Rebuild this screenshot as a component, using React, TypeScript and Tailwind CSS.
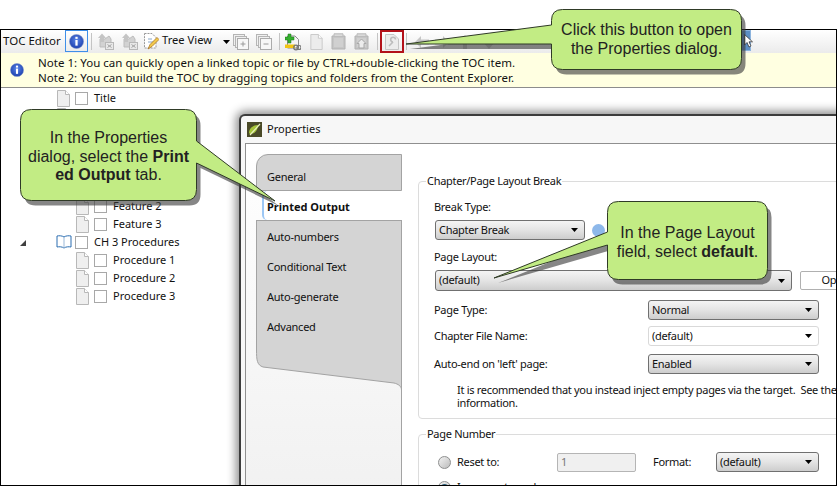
import React from "react";

const Info = ({ size = 15 }: { size?: number }) => (
  <svg width={size} height={size} viewBox="0 0 16 16" className="shrink-0">
    <defs>
      <radialGradient id="ig" cx="50%" cy="40%" r="60%">
        <stop offset="0%" stopColor="#5b86e8" />
        <stop offset="100%" stopColor="#1c3fae" />
      </radialGradient>
    </defs>
    <circle cx="8" cy="8" r="7.5" fill="url(#ig)" stroke="#7f95c9" strokeWidth="0.6" />
    <rect x="6.8" y="3" width="2.4" height="2.2" fill="#fff" />
    <rect x="6.8" y="6.4" width="2.4" height="6" fill="#fff" />
  </svg>
);

const Doc = ({ w = 13, h = 17, fill = "#efefef", stroke = "#b8b8b8" }: { w?: number; h?: number; fill?: string; stroke?: string }) => (
  <svg width={w} height={h} viewBox="0 0 13 17" className="shrink-0">
    <path d="M.5.5H8.5L12.5 4.5V16.5H.5Z" fill={fill} stroke={stroke} />
    <path d="M8.5.5V4.5H12.5" fill="#fff" stroke={stroke} />
  </svg>
);

const Check = () => <div className="w-[13px] h-[13px] shrink-0 border border-[#a8a8a8] bg-white" />;

const Sep = ({ ml }: { ml: string }) => <div className={`w-px h-[17px] bg-[#c4c4c4] shrink-0 ${ml}`} />;

const DualGray = ({ plus }: { plus: boolean }) => (
  <svg width="16" height="16" viewBox="0 0 16 16" className="shrink-0">
    <rect x="0.5" y="0.5" width="11" height="11" fill="#f0f0f0" stroke="#b5b5b5" />
    <rect x="2.5" y="2.5" width="11" height="11" fill="#f0f0f0" stroke="#b5b5b5" />
    <rect x="4.5" y="4.5" width="11" height="11" fill="#f7f7f7" stroke="#ababab" />
    <path d={plus ? "M7.500 10H12.500M10 7.500V12.500" : "M7.500 10H12.500"} stroke="#9a9a9a" />
  </svg>
);

const MoveGray = () => (
  <svg width="17" height="17" viewBox="0 0 17 17" className="shrink-0">
    <path d="M3 6H8L12 3L14 6V14H3Z" fill="#d2d2d2" stroke="#bcbcbc" />
    <path d="M5 .5L9 5H7V9H3V5H1Z" fill="#c4c4c4" />
    <rect x="8.500" y="9.500" width="8" height="7" fill="#e8e8e8" stroke="#b8b8b8" />
    <path d="M10.500 11.500L14.500 14.500M14.500 11.500L10.500 14.500" stroke="#a2a2a2" />
  </svg>
);

const BookGray = ({ arrow }: { arrow?: boolean }) => (
  <svg width="15" height="17" viewBox="0 0 15 17" className="shrink-0">
    <path d="M1 3H14V16H1Z" fill="#c6c6c6" stroke="#b2b2b2" />
    <path d="M3 3V.8H12V3" fill="#dadada" stroke="#bababa" />
    <path d="M3 5H12V14H3Z" fill="#d0d0d0" />
    {arrow && <path d="M7.500 6L12 10.500H10V15H5V10.500H3Z" fill="#ececec" stroke="#a8a8a8" />}
  </svg>
);

const Arrow = ({ flip }: { flip?: boolean }) => (
  <svg width="14" height="12" viewBox="0 0 14 12" className={`shrink-0 ${flip ? "scale-x-[-1]" : ""}`}>
    <path d="M0 6L6 0V3.500H14V8.500H6V12Z" fill="#c6c6c6" />
  </svg>
);

const Caret = () => (
  <svg width="7" height="4" viewBox="0 0 7 4" className="shrink-0">
    <path d="M0 0H7L3.500 4Z" fill="#000" />
  </svg>
);

const Toolbar = () => (
  <div className="h-[23px] flex items-center bg-linear-to-b from-white to-[#ebebeb] shrink-0 relative">
    <span className="ml-[2px] w-[62px] pb-[2px] text-[11.500px]">TOC Editor</span>
    <div className="w-[23px] h-[22px] border border-[#3f8fe8] flex items-center justify-center shrink-0 -mt-[1px]">
      <Info size={15} />
    </div>
    <Sep ml="ml-[3px]" />
    <div className="ml-[5px]"><MoveGray /></div>
    <div className="ml-[7px]"><MoveGray /></div>
    <svg width="15" height="17" viewBox="0 0 15 17" className="ml-[6px] shrink-0">
      <path d="M.5.5H8L12 4.500V15H.5Z" fill="#fff" stroke="#999" strokeDasharray="2 1" />
      <path d="M4 9H10M4 6H8" stroke="#8aa8c8" />
      <path d="M4 16L6 11.500L13 4.500L15 6.500L8 13.500Z" fill="#f2c94c" stroke="#a06a20" strokeWidth="0.7" />
    </svg>
    <span className="ml-[3px] w-[61px] pb-[2px] text-[11.200px]">Tree View</span>
    <Caret />
    <div className="ml-[3px]"><DualGray plus /></div>
    <div className="ml-[7px]"><DualGray plus={false} /></div>
    <Sep ml="ml-[7px]" />
    <svg width="16" height="18" viewBox="0 0 16 18" className="ml-[5px] shrink-0">
      <path d="M2.500 3H10L13.500 6.500V15H2.500Z" fill="#f4f4f4" stroke="#8a8a8a" />
      <path d="M0 4H3V1H6V4H9V7H6V10H3V7H0Z" fill="#35b02f" stroke="#1d7a1a" strokeWidth="0.5" />
      <rect x="0" y="11.500" width="10" height="3.500" fill="#f2c414" />
      <circle cx="11" cy="14.500" r="2.300" fill="none" stroke="#777" strokeWidth="1.200" />
      <circle cx="14" cy="14.500" r="2" fill="none" stroke="#777" strokeWidth="1.200" />
    </svg>
    <div className="ml-[9px]"><Doc w={13} h={16} fill="#ececec" stroke="#c7c7c7" /></div>
    <div className="ml-[8px]"><BookGray /></div>
    <div className="ml-[8px]"><BookGray arrow /></div>
    <Sep ml="ml-[8px]" />
    <div className="ml-[2px] w-[24px] h-[23px] border-2 border-[#b3121a] flex items-center justify-center shrink-0">
      <svg width="14" height="16" viewBox="0 0 14 16">
        <path d="M.5.5H9L13.500 5V15.500H.5Z" fill="#ececec" stroke="#c6c6c6" />
        <path d="M4 12L8 8M8 8A2.400 2.400 0 1 1 10.500 5.500" fill="none" stroke="#bdbdbd" strokeWidth="1.600" />
      </svg>
    </div>
    <Sep ml="ml-[2px]" />
    <div className="ml-[8px]"><Arrow /></div>
    <div className="ml-[6px]"><Arrow flip /></div>
    <svg width="12" height="14" viewBox="0 0 12 14" className="ml-[10px] shrink-0">
      <path d="M6 0L12 7H8V14H4V7H0Z" fill="#c6c6c6" />
    </svg>
    <svg width="12" height="14" viewBox="0 0 12 14" className="ml-[12px] shrink-0">
      <path d="M6 14L12 7H8V0H4V7H0Z" fill="#c6c6c6" />
    </svg>
    <div className="absolute left-[735px] top-0 w-[15px] h-[21px] bg-[#5d8fc4] border border-[#8db4de]" />
    <svg width="9" height="14" viewBox="0 0 9 14" className="absolute left-[743px] top-[4px]">
      <path d="M.5.5V11L3 8.500L5 13L7 12L5 7.800H8.500Z" fill="#fff" stroke="#222" strokeWidth="0.7" />
    </svg>
  </div>
);

const NoteBar = () => (
  <div className="h-[35px] flex items-center bg-[#ffffe1] border-b border-[#8c8c8c] shrink-0">
    <div className="ml-[9px] w-[28px]"><Info size={14} /></div>
    <div className="leading-[15px] text-[11.500px] tracking-[0.03px]">
      <div>Note 1: You can quickly open a linked topic or file by CTRL+double-clicking the TOC item.</div>
      <div>Note 2: You can build the TOC by dragging topics and folders from the Content Explorer.</div>
    </div>
  </div>
);

const Book = () => (
  <svg width="16" height="14" viewBox="0 0 16 14" className="shrink-0">
    <path d="M8 2C6 .6 3 .6 1 1V12C3 11.600 6 11.600 8 13C10 11.600 13 11.600 15 12V1C13 .6 10 .6 8 2Z" fill="#fff" stroke="#2a6db0" />
    <path d="M8 2V13" stroke="#9cb9d8" />
  </svg>
);

const TreeRow = ({ level, text, book, tri }: { level: 1 | 2; text?: string; book?: boolean; tri?: boolean }) => (
  <div className={`h-[18px] flex items-center relative ${level === 1 ? "pl-[56px]" : "pl-[75px]"}`}>
    {tri && (
      <svg width="6" height="6" viewBox="0 0 6 6" className="absolute left-[19px] top-[7px]">
        <path d="M6 0V6H0Z" fill="#404040" />
      </svg>
    )}
    <div className="w-[15px] flex justify-start">
      {book ? <div className="-ml-[1px]"><Book /></div> : <Doc />}
    </div>
    <div className="ml-[3px]"><Check /></div>
    {text && <span className="ml-[6px]">{text}</span>}
  </div>
);

const Tree = () => (
  <div className="pt-[1px]">
    <TreeRow level={1} text="Title" />
    <TreeRow level={1} />
    <div className="h-[72px]" />
    <TreeRow level={2} text="Feature 2" />
    <TreeRow level={2} text="Feature 3" />
    <TreeRow level={1} text="CH 3 Procedures" book tri />
    <TreeRow level={2} text="Procedure 1" />
    <TreeRow level={2} text="Procedure 2" />
    <TreeRow level={2} text="Procedure 3" />
  </div>
);

const Select = ({ label, w, h = "h-[20px]", flat }: { label: string; w: string; h?: string; flat?: boolean }) => (
  <div
    className={`${w} ${h} shrink-0 flex items-center justify-between pl-[3px] pr-[6px] rounded-[3px] border ${
      flat ? "border-[#d9d9d9] bg-white" : "border-[#707070] bg-linear-to-b from-[#f4f4f4] via-[#e4e4e4] to-[#cdcdcd]"
    }`}
  >
    <span>{label}</span>
    <Caret />
  </div>
);

const Row = ({ label, value, flat, mt }: { label: string; value: string; flat?: boolean; mt: string }) => (
  <div className={`flex items-center ${mt}`}>
    <span className="-ml-[1px] w-[214px] shrink-0">{label}</span>
    <Select label={value} w="w-[171px]" flat={flat} />
  </div>
);

const Radio = ({ checked }: { checked?: boolean }) => (
  <div className="w-[13px] h-[13px] shrink-0 rounded-full border border-[#8e8f8f] bg-linear-to-br from-[#f2f2f2] to-[#bdbdbd] flex items-center justify-center">
    {checked && <div className="w-[7px] h-[7px] rounded-full bg-[#2a5d78]" />}
  </div>
);

const TabLabel = ({ children }: { children: string }) => (
  <div className="h-[30px] flex items-center pl-[10px] tracking-[-0.25px]">{children}</div>
);

const Sidebar = () => (
  <div className="w-[146px] shrink-0 ml-[10px] mt-[10px] flex flex-col">
    <div className="h-[37px] bg-[#d4d4d4] border-t border-l border-r border-b border-[#a3a3a3] rounded-tl-[12px] flex items-center pl-[10px] pt-[9px] tracking-[-0.25px]">
      General
    </div>
    <div className="h-[29px] ml-[6px] bg-white border-l-2 border-[#9cc7f5] rounded-l-[5px] flex items-center pl-[3px] pt-[3px] font-bold">
      Printed Output
    </div>
    <div className="h-[130px] bg-[#d4d4d4] border-t border-l border-r border-[#a3a3a3] pt-[1px]">
      <TabLabel>Auto-numbers</TabLabel>
      <TabLabel>Conditional Text</TabLabel>
      <TabLabel>Auto-generate</TabLabel>
      <TabLabel>Advanced</TabLabel>
    </div>
    <svg width="146" height="40" viewBox="0 0 146 40" className="block shrink-0">
      <path d="M.5 0C.5 10 1 15 7 17L138 33C142 34 145.500 36 145.500 40V0Z" fill="#d4d4d4" />
      <path d="M.5 0C.5 10 1 15 7 17L138 33C142 34 145.500 36 145.500 40V0" fill="none" stroke="#a3a3a3" />
    </svg>
    <div className="flex-1 border-r border-[#a3a3a3]" />
  </div>
);

const Content = () => (
  <div className="flex-1 bg-white pl-[16px] pt-[29px] tracking-[-0.3px]">
    <fieldset className="w-[640px] border border-[#dcdcdc] rounded-[4px] pb-[9px]">
      <legend className="ml-[7px] px-[1px] leading-[16px]">Chapter/Page Layout Break</legend>
      <div className="pl-[16px]">
        <div className="-ml-[1px] mt-[10px] h-[16px] leading-[16px]">Break Type:</div>
        <div className="mt-[5px] flex items-center">
          <Select label="Chapter Break" w="w-[150px]" />
          <div className="ml-[7px] w-[13px] h-[13px] rounded-full bg-[#8db8ea]" />
        </div>
        <div className="-ml-[1px] mt-[9px] h-[16px] leading-[16px]">Page Layout:</div>
        <div className="mt-[5px] flex items-center gap-[8px]">
          <Select label="(default)" w="w-[357px]" h="h-[21px]" />
          <div className="w-[70px] h-[19px] border border-[#b0b0b0] rounded-[2px] bg-white flex items-center justify-center">Open</div>
        </div>
        <Row mt="mt-[9px]" label="Page Type:" value="Normal" />
        <Row mt="mt-[6px]" label="Chapter File Name:" value="(default)" flat />
        <Row mt="mt-[8px]" label="Auto-end on 'left' page:" value="Enabled" />
        <div className="mt-[9px] pl-[22px] leading-[13px] whitespace-pre">
          <div>It is recommended that you instead inject empty pages via the target.  See the</div>
          <div>information.</div>
        </div>
      </div>
    </fieldset>
    <fieldset className="w-[640px] mt-[7px] border border-[#dcdcdc] rounded-[4px]">
      <legend className="ml-[7px] px-[1px] leading-[16px]">Page Number</legend>
      <div className="pl-[19px]">
        <div className="mt-[10px] flex items-center">
          <Radio />
          <span className="ml-[6px] w-[100px]">Reset to:</span>
          <div className="w-[79px] h-[19px] border border-[#b5b5b5] bg-[#f0f0f0] text-[#777] rounded-[2px] flex items-center pl-[3px]">1</div>
          <span className="ml-[17px] w-[63px]">Format:</span>
          <Select label="(default)" w="w-[103px]" />
        </div>
        <div className="mt-[7px] flex items-center">
          <Radio checked />
          <span className="ml-[6px]">Increment number</span>
        </div>
      </div>
    </fieldset>
  </div>
);

const Dialog = () => (
  <div className="absolute left-[238px] top-[84px] w-[700px] h-[500px] bg-[#f7f7f7] border-l-2 border-t-2 border-[#3c3c3c] rounded-tl-[6px] shadow-[0_0_10px_3px_rgba(0,0,0,0.45)]">
    <div className="h-[27px] flex items-center">
      <div className="ml-[6px] w-[15px] h-[15px] bg-[#4a4a28] flex items-center justify-center">
        <svg width="13" height="13" viewBox="0 0 13 13">
          <path d="M1 10C1 5 5 2 10 2C10 7 7 11 2 11Z" fill="#a6c43a" />
          <path d="M2 12L12 1" stroke="#e9f2c0" strokeWidth="1.200" />
        </svg>
      </div>
      <span className="ml-[5px]">Properties</span>
    </div>
    <div className="ml-[4px] h-[460px] flex border-l border-t border-[#8f8f8f] bg-linear-to-b from-white to-[#ededed]">
      <Sidebar />
      <Content />
    </div>
  </div>
);

const bubble = (x: number, y: number, w: number, h: number, r: number, side: "l" | "r", a: number, b: number, tx: number, ty: number) => {
  const R = x + w;
  const B = y + h;
  const rightPart = side === "r" ? `L${R} ${a}L${tx} ${ty}L${R} ${b}` : "";
  const leftPart = side === "l" ? `L${x} ${b}L${tx} ${ty}L${x} ${a}` : "";
  return `M${x + r} ${y}H${R - r}Q${R} ${y} ${R} ${y + r}${rightPart}V${B - r}Q${R} ${B} ${R - r} ${B}H${x + r}Q${x} ${B} ${x} ${B - r}${leftPart}V${y + r}Q${x} ${y} ${x + r} ${y}Z`;
};

const shapes = [
  bubble(20.5, 109.5, 176, 91, 11, "r", 141, 163, 275, 201),
  bubble(551.5, 9.5, 190, 60, 11, "l", 25, 44, 406, 44),
  bubble(607.5, 201.5, 160, 78, 11, "l", 232, 245, 494, 278),
];

const Callouts = () => (
  <>
    <svg width="837" height="486" viewBox="0 0 837 486" className="absolute left-0 top-0 pointer-events-none">
      {shapes.map((d, i) => (
        <path key={`s${i}`} d={d} fill="#3c3c3c" fillOpacity="0.62" transform="translate(4 5)" />
      ))}
      {shapes.map((d, i) => (
        <path key={i} d={d} fill="#c2ec84" stroke="#2f3a26" strokeWidth="1" />
      ))}
    </svg>
    <div className="absolute left-[21px] top-[129px] w-[175px] text-center text-[16px] leading-[18.500px] font-['Liberation_Sans',sans-serif] text-[#222]">
      In the Properties
      <br />
      dialog, select the <b>Print</b>
      <br />
      <b>ed Output</b> tab.
    </div>
    <div className="absolute left-[552px] top-[21px] w-[189px] text-center text-[16px] leading-[18.500px] font-['Liberation_Sans',sans-serif] text-[#222]">
      Click this button to open
      <br />
      the Properties dialog.
    </div>
    <div className="absolute left-[608px] top-[223px] w-[159px] text-center text-[16px] leading-[19px] font-['Liberation_Sans',sans-serif] text-[#222]">
      In the Page Layout
      <br />
      field, select <b>default</b>.
    </div>
  </>
);

export default function App() {
  return (
    <div className="relative w-[837px] h-[486px] bg-white pt-[29px] overflow-hidden font-['Noto_Sans',sans-serif] text-[11px] text-[#111]">
      <div className="relative h-[457px] border border-black flex flex-col overflow-hidden bg-white">
        <Toolbar />
        <NoteBar />
        <Tree />
        <Dialog />
      </div>
      <Callouts />
    </div>
  );
}
